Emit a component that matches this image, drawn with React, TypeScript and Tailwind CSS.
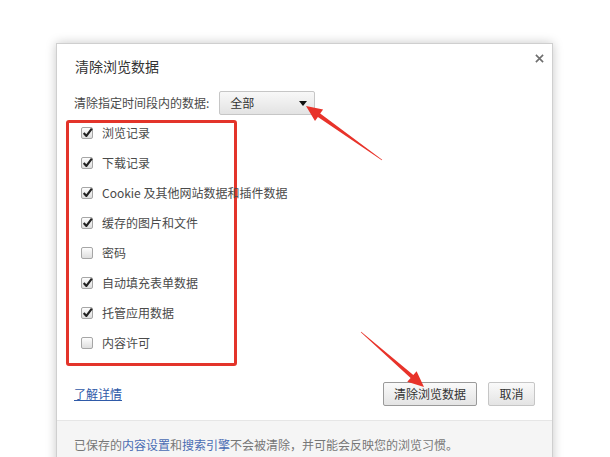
import React from "react";

const FONT = { fontFamily: '"Noto Sans CJK SC", "Liberation Sans", sans-serif' };

const items = [
  { label: "浏览记录", checked: true },
  { label: "下载记录", checked: true },
  { label: "Cookie 及其他网站数据和插件数据", checked: true },
  { label: "缓存的图片和文件", checked: true },
  { label: "密码", checked: false },
  { label: "自动填充表单数据", checked: true },
  { label: "托管应用数据", checked: true },
  { label: "内容许可", checked: false },
];

function Checkbox({ checked }: { checked: boolean }) {
  return (
    <span className="relative w-[12px] h-[12px] rounded-[2px] border border-[#a6a6a6] bg-gradient-to-b from-[#fdfdfd] to-[#dedede] flex-shrink-0">
      {checked && (
        <svg viewBox="0 0 12 12" className="absolute left-[-1px] top-[-2px] w-[13px] h-[13px]">
          <path d="M2.5 6.5 L5 9.2 L10 2.5" fill="none" stroke="#222" strokeWidth="2" strokeLinejoin="round" />
        </svg>
      )}
    </span>
  );
}

// tapered arrow: thin tail, thick near head, filled triangle tip
function arrowPoints(tx: number, ty: number, hx: number, hy: number) {
  const dx = hx - tx;
  const dy = hy - ty;
  const len = Math.hypot(dx, dy);
  const ux = dx / len;
  const uy = dy / len;
  const nx = -uy;
  const ny = ux;
  const headLen = 16;
  const headW = 7;
  const bx = hx - ux * headLen;
  const by = hy - uy * headLen;
  const p = (x: number, y: number) => `${x.toFixed(1)},${y.toFixed(1)}`;
  return [
    p(tx + nx * 0.3, ty + ny * 0.3),
    p(bx + nx * 2, by + ny * 2),
    p(bx + nx * headW, by + ny * headW),
    p(hx, hy),
    p(bx - nx * headW, by - ny * headW),
    p(bx - nx * 2, by - ny * 2),
    p(tx - nx * 0.3, ty - ny * 0.3),
  ].join(" ");
}

export default function App() {
  return (
    <div className="relative w-[610px] h-[457px] overflow-hidden bg-white" style={FONT}>
      <div className="ml-[56px] mt-[43px] w-[497px] bg-white border border-[#cfcfcf] shadow-[0_0_10px_rgba(0,0,0,0.22)]">
        {/* header */}
        <div className="relative px-[18px] pt-[13px]">
          <h1 className="text-[14px] leading-[18px] text-[#333]">清除浏览数据</h1>
          <svg viewBox="0 0 10 10" className="absolute right-[8px] top-[10px] w-[9px] h-[9px]">
            <path d="M1 1 L9 9 M9 1 L1 9" stroke="#6f6f6f" strokeWidth="1.8" />
          </svg>
        </div>

        {/* time range */}
        <div className="px-[17px] mt-[16px] flex items-center gap-[10px] h-[24px]">
          <span className="text-[12px] text-[#4a4a4a]">清除指定时间段内的数据:</span>
          <div className="w-[96px] h-[24px] flex items-center justify-between pl-[10px] pr-[7px] border border-[#c6c6c6] rounded-[2px] bg-gradient-to-b from-[#f8f8f8] to-[#e3e3e3]">
            <span className="text-[12px] text-[#333]">全部</span>
            <svg viewBox="0 0 8 5" className="w-[8px] h-[5px]">
              <path d="M0 0 L8 0 L4 5 Z" fill="#111" />
            </svg>
          </div>
        </div>

        {/* checkbox list, outlined in red */}
        <div className="ml-[9px] mt-[5px] w-[171px] border-[3px] border-[#e3342a] rounded-[3px] flex flex-col gap-[10px] pb-[10px] pl-[12px]">
          {items.map((it) => (
            <label key={it.label} className="h-[20px] flex items-center gap-[9px]">
              <Checkbox checked={it.checked} />
              <span className="text-[12px] text-[#4a4a4a] whitespace-nowrap">{it.label}</span>
            </label>
          ))}
        </div>

        {/* actions */}
        <div className="px-[17px] mt-[16px] flex items-center justify-between h-[24px]">
          <a className="text-[12px] text-[#2f5aa8] underline">了解详情</a>
          <div className="flex gap-[11px]">
            <button className="w-[94px] h-[24px] text-[12px] text-[#333] border border-[#9a9a9a] rounded-[2px] bg-gradient-to-b from-[#fafafa] to-[#e4e4e4]">
              清除浏览数据
            </button>
            <button className="w-[47px] h-[24px] text-[12px] text-[#333] border border-[#c6c6c6] rounded-[2px] bg-gradient-to-b from-[#fafafa] to-[#e4e4e4]">
              取消
            </button>
          </div>
        </div>

        {/* footer */}
        <div className="mt-[14px] border-t border-[#e6e6e6] bg-[#f5f5f5] px-[17px] pt-[15px] pb-[20px]">
          <p className="text-[12px] text-[#777]">
            已保存的<span className="text-[#4a6cb3]">内容设置</span>和<span className="text-[#4a6cb3]">搜索引擎</span>不会被清除，并可能会反映您的浏览习惯。
          </p>
        </div>
      </div>

      {/* annotation arrows */}
      <svg className="absolute left-0 top-0 w-[610px] h-[457px] pointer-events-none" viewBox="0 0 610 457">
        <polygon points={arrowPoints(382, 160, 306, 106)} fill="#e8332a" />
        <polygon points={arrowPoints(361, 332, 424, 387)} fill="#e8332a" />
      </svg>
    </div>
  );
}
